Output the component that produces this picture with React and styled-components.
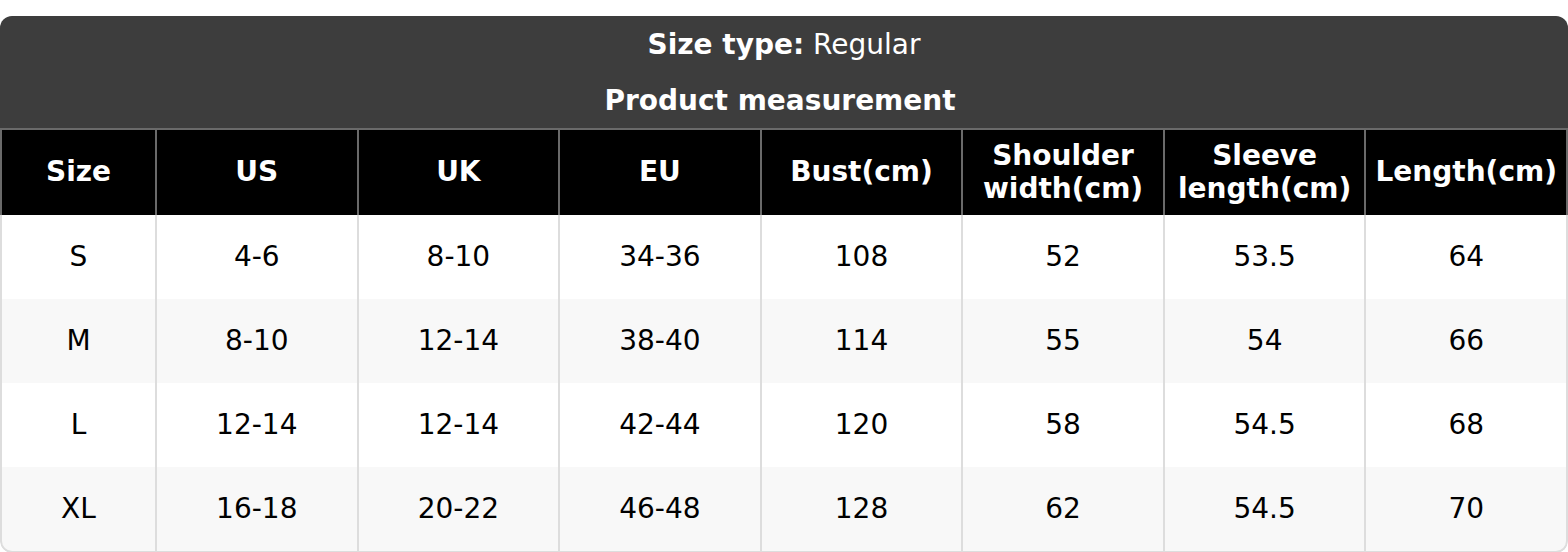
import styled, { createGlobalStyle } from 'styled-components';

const GlobalStyle = createGlobalStyle`
  body {
    margin: 0;
    background: #ffffff;
    font-family: 'DejaVu Sans', Verdana, sans-serif;
  }
`;

const Page = styled.div`
  padding-top: 16px;
`;

const Panel = styled.div`
  border-radius: 12px;
  overflow: hidden;
  width: 1568px;
`;

const TitleBlock = styled.div`
  background-color: #3d3d3d;
  color: #ffffff;
  text-align: center;
`;

const TitleLine = styled.div`
  height: 56px;
  display: flex;
  align-items: center;
  justify-content: center;
  padding-right: ${(p) => (p.$bold ? '8px' : '0')};
  font-size: 28px;
  font-weight: ${(p) => (p.$bold ? 700 : 400)};
  white-space: pre;

  strong {
    font-weight: 700;
  }
`;

const Row = styled.div`
  display: grid;
  grid-template-columns: 153px repeat(7, 1fr);
  height: ${(p) => (p.$head ? '85px' : '84px')};
  background-color: ${(p) => (p.$head ? '#000000' : p.$odd ? '#f8f8f8' : '#ffffff')};
  border-left: 2px solid ${(p) => (p.$head ? '#6a6a6a' : '#dddddd')};
  border-right: 2px solid ${(p) => (p.$head ? '#6a6a6a' : '#dddddd')};
  border-top: ${(p) => (p.$head ? '2px solid #6a6a6a' : 'none')};
  border-bottom: ${(p) => (p.$last ? '2px solid #dddddd' : 'none')};
  border-radius: ${(p) => (p.$last ? '0 0 12px 12px' : '0')};
`;

const Cell = styled.div`
  display: flex;
  align-items: center;
  justify-content: center;
  text-align: center;
  font-size: 28px;
  line-height: 1.16;
  color: ${(p) => (p.$head ? '#ffffff' : '#000000')};
  font-weight: ${(p) => (p.$head ? 700 : 400)};
  white-space: pre-line;
  border-left: ${(p) => (p.$first ? 'none' : `2px solid ${p.$head ? '#6a6a6a' : '#dddddd'}`)};
`;

const columns = ['Size', 'US', 'UK', 'EU', 'Bust(cm)', 'Shoulder\nwidth(cm)', 'Sleeve\nlength(cm)', 'Length(cm)'];

const rows = [
  ['S', '4-6', '8-10', '34-36', '108', '52', '53.5', '64'],
  ['M', '8-10', '12-14', '38-40', '114', '55', '54', '66'],
  ['L', '12-14', '12-14', '42-44', '120', '58', '54.5', '68'],
  ['XL', '16-18', '20-22', '46-48', '128', '62', '54.5', '70'],
];

function SizeChart() {
  return (
    <Page>
      <GlobalStyle />
      <Panel>
        <TitleBlock>
          <TitleLine>
            <strong>Size type:</strong> Regular
          </TitleLine>
          <TitleLine $bold>Product measurement</TitleLine>
        </TitleBlock>
        <Row $head>
          {columns.map((col, i) => (
            <Cell key={col} $head $first={i === 0}>
              {col}
            </Cell>
          ))}
        </Row>
        {rows.map((row, r) => (
          <Row key={row[0]} $odd={r % 2 === 1} $last={r === rows.length - 1}>
            {row.map((val, i) => (
              <Cell key={i} $first={i === 0}>
                {val}
              </Cell>
            ))}
          </Row>
        ))}
      </Panel>
    </Page>
  );
}

export default SizeChart;
